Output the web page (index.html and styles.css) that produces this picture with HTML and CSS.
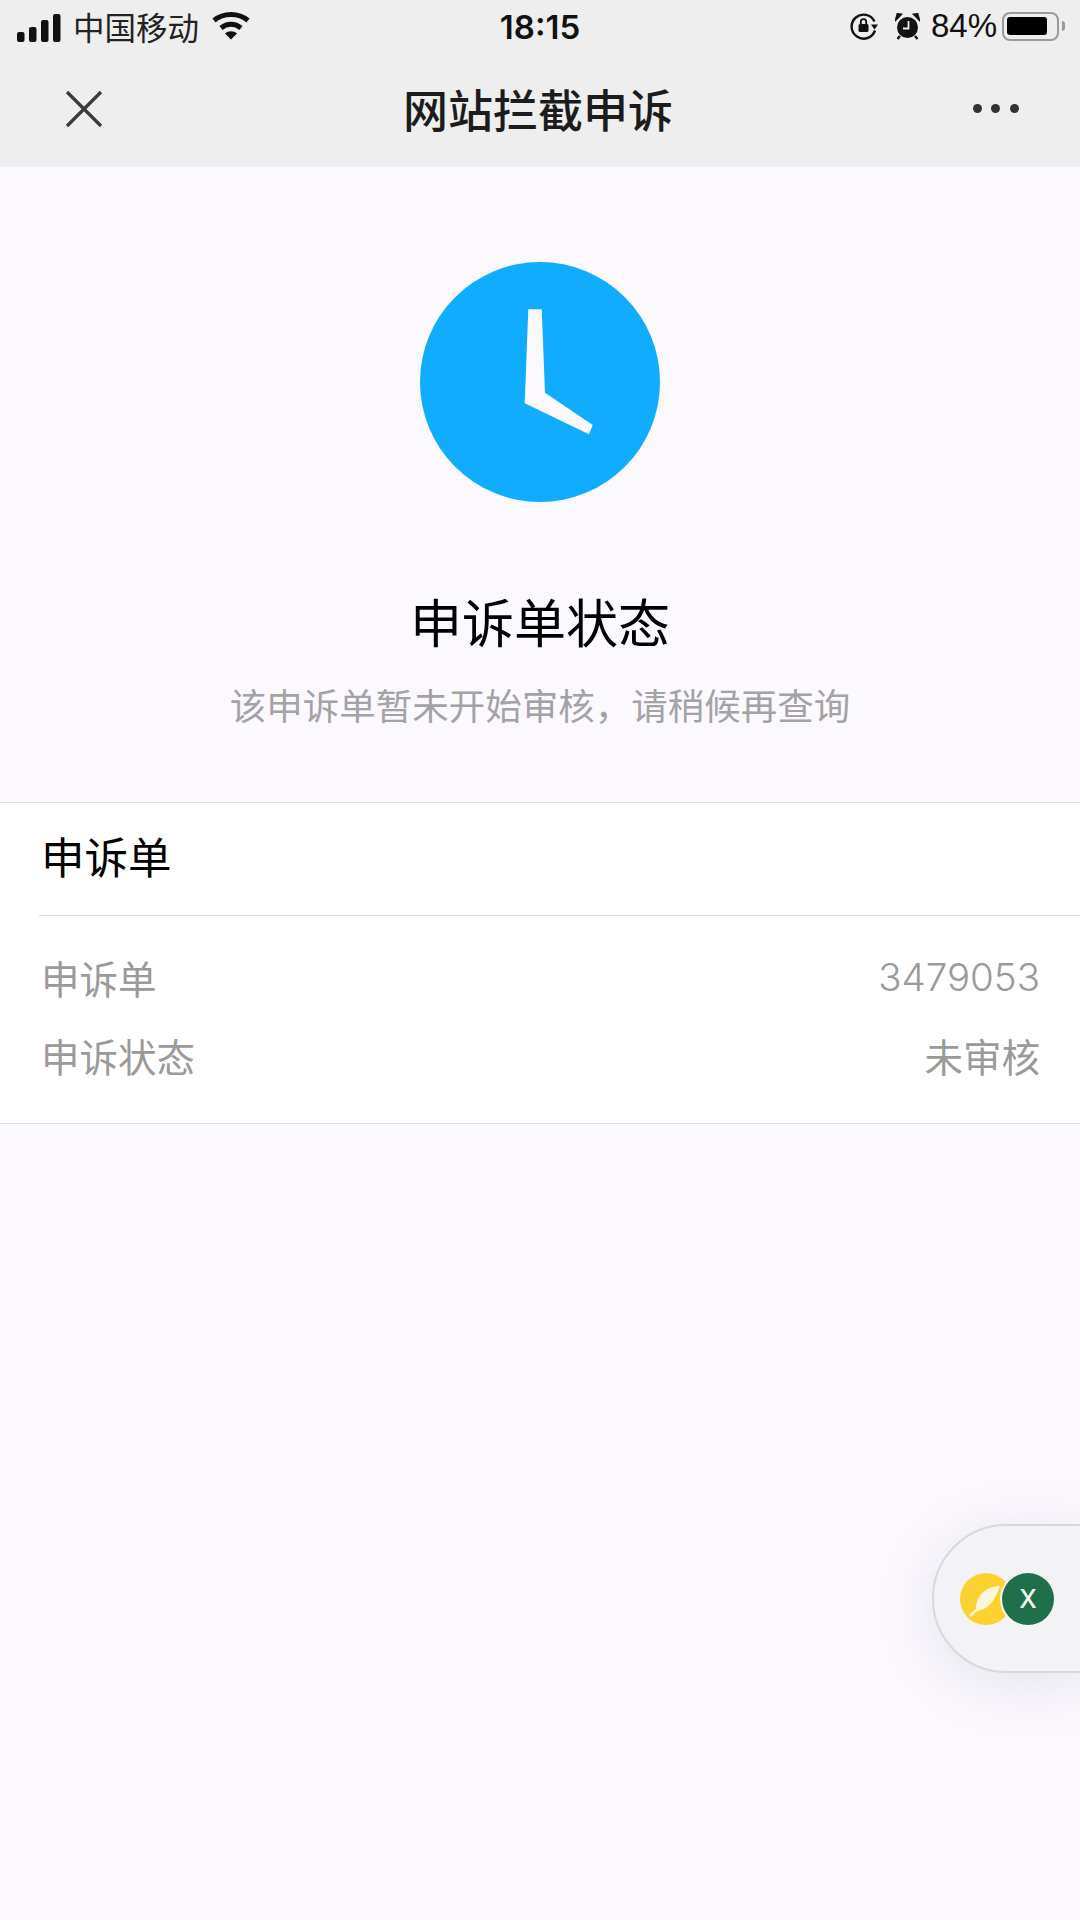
FILE: index.html
```html
<!DOCTYPE html>
<html lang="zh-CN">
<head>
  <meta charset="UTF-8" />
  <meta name="viewport" content="width=device-width, initial-scale=1.0"/>
  <title>网站拦截申诉</title>
  <link rel="stylesheet" href="styles.css">
</head>
<body>

  <div class="header">
    <div class="statusbar">
      <div class="status-left">
        <svg class="icon-signal" width="44" height="28" viewBox="0 0 44 28">
          <rect x="0" y="18" width="7.5" height="10" rx="2"/>
          <rect x="12" y="13" width="7.5" height="15" rx="2"/>
          <rect x="24" y="6" width="7.5" height="22" rx="2"/>
          <rect x="36" y="0" width="7.5" height="28" rx="2"/>
        </svg>
        <span class="carrier">中国移动</span>
        <svg class="icon-wifi" width="40" height="30" viewBox="0 0 38 30">
          <path d="M2 10.500C11.500 2.500 26.500 2.500 36 10.500" fill="none" stroke="#111" stroke-width="5"/>
          <path d="M9 18C15 13 23 13 29 18" fill="none" stroke="#111" stroke-width="5"/>
          <path d="M13 23.500C16.500 20.500 21.500 20.500 25 23.500L19 29.500Z"/>
        </svg>
      </div>
      <div class="clock">18:15</div>
      <div class="status-right">
        <svg class="icon-rotate" width="28" height="28" viewBox="0 0 28 28">
          <path d="M24.500 9.500A12 12 0 1 0 25 18.500" fill="none" stroke="#111" stroke-width="2.400"/>
          <path d="M21 12.500H28L24.500 17.500Z"/>
          <rect x="8.500" y="12" width="10" height="8" rx="1.500"/>
          <path d="M10.800 12V9.800a2.700 2.700 0 0 1 5.400 0V12" fill="none" stroke="#111" stroke-width="1.800"/>
        </svg>
        <svg class="icon-alarm" width="25" height="27" viewBox="0 0 25 27">
          <circle cx="12.500" cy="14.500" r="10.500"/>
          <path d="M1 6.500 6 1.500 2.500 1ZM24 6.500 19 1.500 22.500 1Z" stroke="#111" stroke-width="2"/>
          <path d="M5 23 2.500 26M20 23 22.500 26" stroke="#111" stroke-width="2.400"/>
          <path d="M13.500 8V15.500H8" fill="none" stroke="#eee" stroke-width="1.800"/>
        </svg>
        <span class="battery-text">84%</span>
        <div class="battery"><div class="battery-fill"></div></div>
        <div class="battery-nub"></div>
      </div>
    </div>
    <div class="navbar">
      <svg class="icon-close" width="38" height="38" viewBox="0 0 38 38">
        <path d="M2 2 36 36M36 2 2 36" fill="none" stroke="#3a3a3a" stroke-width="3.200"/>
      </svg>
      <div class="nav-title">网站拦截申诉</div>
      <div class="nav-more"><span></span><span></span><span></span></div>
    </div>
  </div>

  <div class="hero">
    <svg class="icon-clock" width="240" height="240" viewBox="0 0 240 240">
      <circle cx="120" cy="120" r="120" fill="#10adff"/>
      <path d="M108.300 47.300H121.700L125 130.700 172.700 163 169 172.300 104.700 141.300Z" fill="#fbf9fe"/>
    </svg>
    <h2 class="hero-title">申诉单状态</h2>
    <p class="hero-text">该申诉单暂未开始审核&#xFF0C;请稍候再查询</p>
  </div>

  <div class="card">
    <div class="card-head"><span>申诉单</span></div>
    <div class="card-body">
      <div class="row"><span>申诉单</span><span class="row-num">3479053</span></div>
      <div class="row"><span>申诉状态</span><span>未审核</span></div>
    </div>
  </div>

  <div class="float-ball">
    <div class="ball-yellow">
      <svg width="52" height="52" viewBox="0 0 52 52">
        <path d="M40 13C28 13 19 20 16.500 30L15.500 38C26 38 34 30 40 13Z" fill="#fdf6dc"/>
        <path d="M16 37 10 43" stroke="#fdf6dc" stroke-width="2.500"/>
      </svg>
    </div>
    <div class="ball-green">X</div>
  </div>

</body>
</html>
```

FILE: styles.css
```css
body {
  font-family: "Noto Sans CJK SC", "Liberation Sans", sans-serif;
  margin: 0;
  padding: 0;
  width: 1080px;
  height: 1920px;
  overflow: hidden;
  position: relative;
  background-color: #fbf9fe;
  color: #111;
}

.header {
  background-color: #eeeeee;
  height: 167px;
}

.statusbar {
  height: 55px;
  display: grid;
  grid-template-columns: 1fr auto 1fr;
  align-items: center;
}

.status-left {
  display: flex;
  align-items: center;
  padding-left: 17px;
}

.icon-signal {
  fill: #111;
}

.carrier {
  font-size: 31.500px;
  line-height: 40px;
  margin: -4px 0 0 12px;
  color: #222;
}

.icon-wifi {
  fill: #111;
  margin-left: 12px;
  margin-top: -5px;
}

.clock {
  font-family: "Inter", "Liberation Sans", sans-serif;
  font-size: 33px;
  font-weight: 600;
  line-height: 40px;
  margin-top: -2px;
}

.status-right {
  display: flex;
  align-items: center;
  justify-content: flex-end;
  padding-right: 15px;
  margin-top: -3px;
}

.icon-rotate {
  fill: #111;
}

.icon-alarm {
  fill: #111;
  margin-left: 17px;
}

.battery-text {
  font-family: "Liberation Sans", sans-serif;
  font-size: 33px;
  line-height: 40px;
  margin-left: 11px;
}

.battery {
  width: 57px;
  height: 29px;
  box-sizing: border-box;
  border: 2.500px solid #9a9a9a;
  border-radius: 8px;
  padding: 3px;
  margin-left: 5px;
}

.battery-fill {
  width: 40px;
  height: 18px;
  background-color: #000;
  border-radius: 3px;
}

.battery-nub {
  width: 3px;
  height: 10px;
  background-color: #9a9a9a;
  border-radius: 0 3px 3px 0;
  margin-left: 3px;
}

.navbar {
  height: 112px;
  box-sizing: border-box;
  display: flex;
  align-items: center;
  justify-content: space-between;
  padding: 0 61px 5px 65px;
}

.nav-title {
  font-size: 45px;
  font-weight: 500;
  color: #1c1c1c;
  line-height: 60px;
}

.nav-more {
  display: flex;
  gap: 9.500px;
}

.nav-more span {
  width: 9px;
  height: 9px;
  border-radius: 50%;
  background-color: #333;
}

.hero {
  display: flex;
  flex-direction: column;
  align-items: center;
  padding: 95px 0 77px;
}

.icon-clock {
  display: block;
}

.hero-title {
  margin: 89px 0 0;
  font-size: 52px;
  font-weight: 400;
  line-height: 60px;
  color: #000;
}

.hero-text {
  margin: 34px 0 0;
  font-size: 36.500px;
  line-height: 40px;
  color: #a3a3a6;
}

.card {
  background-color: #fff;
  border-top: 1px solid #dedede;
  border-bottom: 1px solid #dedede;
  padding-left: 39px;
}

.card-head {
  height: 113px;
  box-sizing: border-box;
  padding: 23px 0 0 2px;
  font-size: 43.500px;
  line-height: 60px;
  color: #000;
  border-bottom: 1px solid #dedede;
}

.card-body {
  padding: 22px 40px 29px 2px;
}

.row {
  display: flex;
  justify-content: space-between;
  align-items: center;
  height: 78px;
  font-size: 38.500px;
  color: #9a9a9a;
}

.row-num {
  font-family: "Inter", "Liberation Sans", sans-serif;
  font-weight: 300;
  font-size: 38.500px;
}

/* floating pill, sits over the page */
.float-ball {
  position: absolute;
  left: 932px;
  top: 1524px;
  width: 160px;
  height: 149px;
  box-sizing: border-box;
  border: 2px solid #d9d9dd;
  border-radius: 75px 0 0 75px;
  background-color: #f3f3f5;
  box-shadow: 0 10px 60px rgba(120, 120, 140, 0.16);
}

.ball-yellow {
  position: absolute;
  left: 26px;
  top: 47px;
  width: 52px;
  height: 52px;
  border-radius: 50%;
  background-color: #fbd22f;
}

.ball-yellow svg {
  display: block;
}

.ball-green {
  position: absolute;
  left: 68px;
  top: 47px;
  width: 52px;
  height: 52px;
  border-radius: 50%;
  background-color: #1f6f4a;
  box-shadow: 0 0 0 2px #f3f3f5;
  color: #f2f7f2;
  font-family: "Inter", "Liberation Sans", sans-serif;
  font-size: 25px;
  font-weight: 500;
  line-height: 52px;
  text-align: center;
}
```
